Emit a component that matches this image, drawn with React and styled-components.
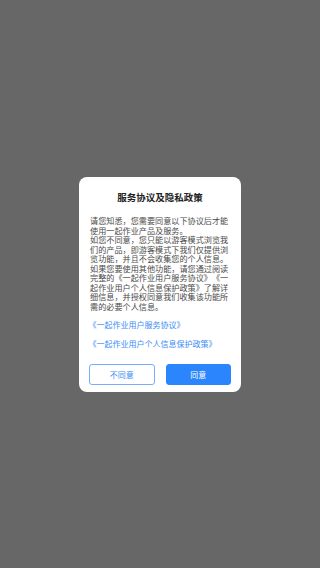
import React from 'react';
import styled, { createGlobalStyle } from 'styled-components';

const GlobalStyle = createGlobalStyle`
    html, body {
        margin: 0;
        padding: 0;
    }
    body {
        font-family: "Noto Sans CJK SC", "Noto Sans", sans-serif;
        text-spacing-trim: space-all;
    }
`;

// 회색 배경 (딤 처리된 화면)
const Screen = styled.div`
    width: 320px;
    height: 568px;
    background: #676767;
    display: flex;
    align-items: center;
    justify-content: center;
`;

const Dialog = styled.div`
    width: 162px;
    height: 215px;
    box-sizing: border-box;
    background: #ffffff;
    border-radius: 8px;
    padding: 14.5px 11px 7px;
    display: flex;
    flex-direction: column;
`;

const Title = styled.div`
    font-size: 9.5px;
    line-height: 12px;
    font-weight: 700;
    color: #222222;
    text-align: center;
`;

const Body = styled.div`
    margin-top: 13px;
    font-size: 8.15px;
    line-height: 9.5px;
    color: #4a4a4a;
    p {
        margin: 0;
    }
`;

const LinkList = styled.div`
    margin-top: 9px;
    margin-left: -1.5px;
    display: flex;
    flex-direction: column;
    gap: 8.6px;
`;

const PolicyLink = styled.a`
    font-size: 8px;
    line-height: 10px;
    color: #3a8cf6;
    text-decoration: none;
    white-space: nowrap;
`;

const ButtonRow = styled.div`
    margin-top: auto;
    margin-left: -1px;
    margin-right: -1px;
    display: flex;
    gap: 11px;
`;

const Button = styled.button`
    flex: 1;
    height: 21px;
    box-sizing: border-box;
    border-radius: 3px;
    font-family: inherit;
    font-size: 8px;
    padding: 0;
    cursor: pointer;
    border: 1px solid ${(props) => (props.primary ? '#2b86fe' : '#77aefa')};
    background: ${(props) => (props.primary ? '#2b86fe' : '#ffffff')};
    color: ${(props) => (props.primary ? '#ffffff' : '#3a8cf6')};
`;

const App = () => {
    return (
        <>
            <GlobalStyle />
            <Screen>
                <Dialog>
                    <Title>服务协议及隐私政策</Title>
                    <Body>
                        <p>请您知悉，您需要同意以下协议后才能使用一起作业产品及服务。</p>
                        <p>如您不同意，您只能以游客模式浏览我们的产品，即游客模式下我们仅提供浏览功能，并且不会收集您的个人信息。</p>
                        <p>如果您要使用其他功能，请您通过阅读完整的《一起作业用户服务协议》《一起作业用户个人信息保护政策》了解详细信息，并授权同意我们收集该功能所需的必要个人信息。</p>
                    </Body>
                    <LinkList>
                        <PolicyLink href="#">《一起作业用户服务协议》</PolicyLink>
                        <PolicyLink href="#">《一起作业用户个人信息保护政策》</PolicyLink>
                    </LinkList>
                    <ButtonRow>
                        <Button>不同意</Button>
                        <Button primary>同意</Button>
                    </ButtonRow>
                </Dialog>
            </Screen>
        </>
    );
};

export default App;
